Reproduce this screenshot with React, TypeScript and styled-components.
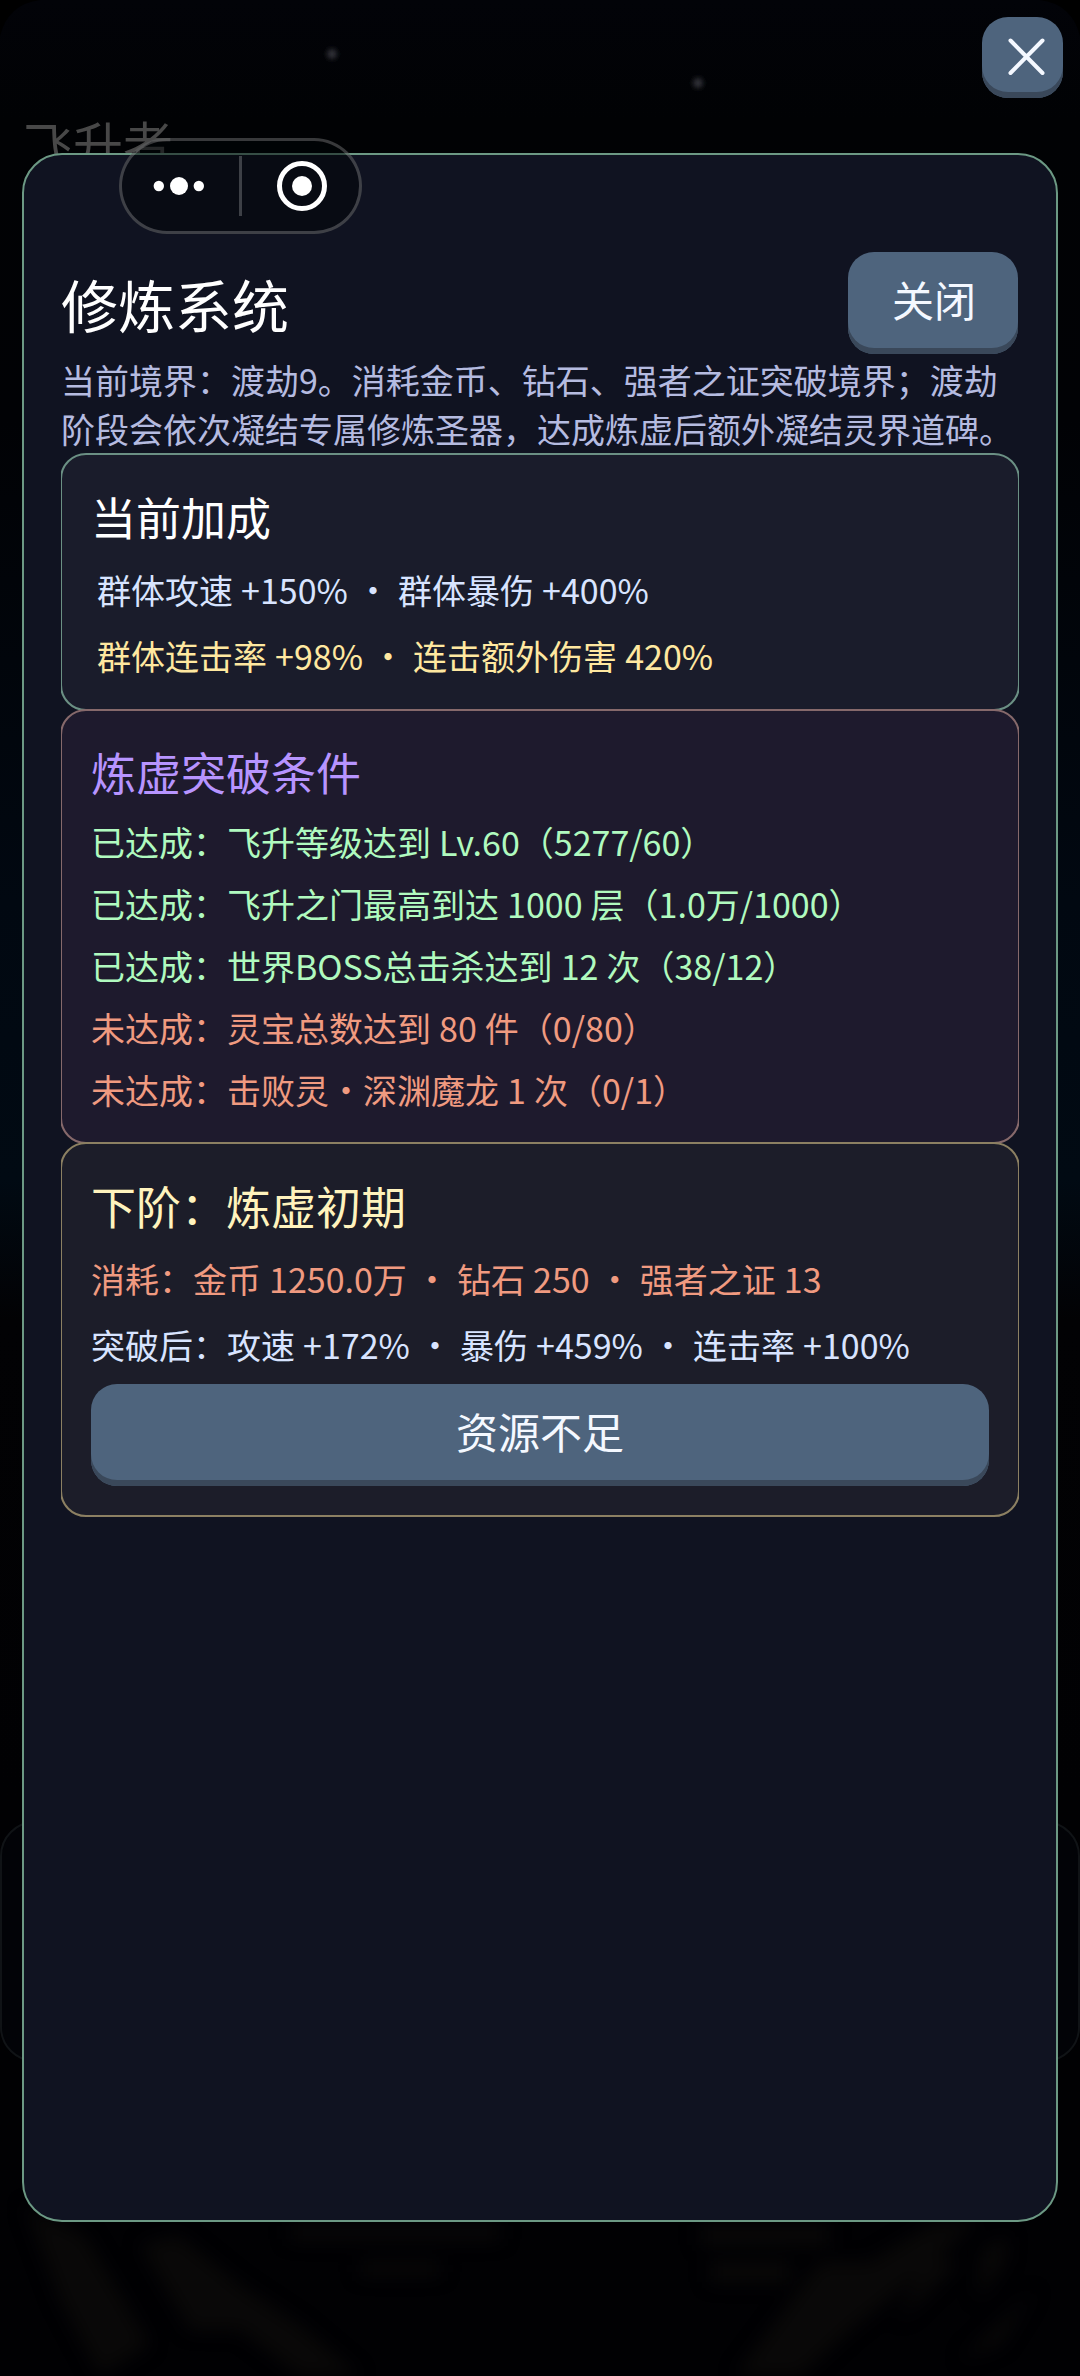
import React from "react";
import styled, { createGlobalStyle } from "styled-components";

const GlobalStyle = createGlobalStyle`
  html, body { margin: 0; padding: 0; background: #000; }
  *, *::before, *::after { box-sizing: border-box; }
  body { font-family: "Noto Sans CJK SC", "Noto Sans", sans-serif; font-weight: 400; }
`;

const Screen = styled.main`
  position: relative;
  width: 1080px;
  height: 2376px;
  padding: 153px 22px 154px;
  overflow: hidden;
  display: flex;
  flex-direction: column;
  background: linear-gradient(180deg, #020308 0, #010204 120px, #010205 420px, #010811 900px, #010a13 1180px, #020204 1320px, #010103 1800px, #010103 2376px);
`;

const Scenery = styled.svg`
  position: absolute;
  inset: 0;
`;

const PlayerName = styled.div`
  position: absolute;
  left: 23px;
  top: 106px;
  font-size: 50px;
  line-height: 72px;
  color: #484848;
`;

const Panel = styled.section`
  position: relative;
  flex: 1;
  display: flex;
  flex-direction: column;
  padding: 97px 37px 0;
  border: 2px solid #6c9984;
  border-radius: 40px;
  background: #101321;
`;

const Header = styled.header`
  display: flex;
  justify-content: space-between;
  align-items: flex-start;
  height: 103px;
`;

const Title = styled.h1`
  margin: 0;
  font-size: 57px;
  font-weight: 400;
  line-height: 103px;
  color: #fff;
`;

const Button = styled.button<{ $wide?: boolean }>`
  display: flex;
  align-items: center;
  justify-content: center;
  width: ${(p) => (p.$wide ? "100%" : "170px")};
  height: 102px;
  margin: ${(p) => (p.$wide ? "6px 0 0" : "0 1px 0 0")};
  padding: ${(p) => (p.$wide ? "0 0 8px" : "0 0 8px 2px")};
  border: 0;
  border-radius: 26px;
  background: #4e647d;
  box-shadow: inset 0 -6px 0 #3a485a;
  color: #f4f8ff;
  font-family: inherit;
  font-size: 42px;
  line-height: 60px;
`;

const Hint = styled.p`
  margin: 0;
  height: 98px;
  font-size: 34px;
  line-height: 49px;
  color: #b5bbe0;
`;

const CardList = styled.div`
  overflow: hidden;
`;

const Card = styled.article<{ $border: string; $fill: string; $height: number; $top?: number }>`
  position: relative;
  display: flex;
  flex-direction: column;
  height: ${(p) => p.$height}px;
  margin: 0 -1px;
  padding: ${(p) => p.$top ?? 29}px 29px 0;
  border: 2px solid ${(p) => p.$border};
  border-radius: 26px;
  background: ${(p) => p.$fill};

  & + & {
    margin-top: -2px;
  }
`;

const CardTitle = styled.h2<{ $color: string; $gap?: number }>`
  margin: 0 0 ${(p) => p.$gap ?? 7}px;
  font-size: 45px;
  font-weight: 400;
  line-height: 66px;
  color: ${(p) => p.$color};
`;

const Line = styled.div<{ $color: string; $height: number; $indent?: number }>`
  height: ${(p) => p.$height}px;
  padding-left: ${(p) => p.$indent ?? 0}px;
  font-size: 34px;
  line-height: ${(p) => p.$height}px;
  word-spacing: 0.45px;
  white-space: pre;
  color: ${(p) => p.$color};
`;

const CloseCorner = styled.button`
  position: absolute;
  left: 982px;
  top: 17px;
  width: 81px;
  height: 81px;
  padding: 0;
  border: 0;
  border-radius: 26px;
  background: #4e647d;
  box-shadow: inset 0 -6px 0 #3a485a;

  svg { display: block; }
`;

const Capsule = styled.nav`
  position: absolute;
  left: 119px;
  top: 138px;
  width: 243px;
  height: 96px;
  border: 3px solid rgba(255, 255, 255, 0.22);
  border-radius: 48px;
  background: rgba(0, 4, 5, 0.5);
  display: flex;
  align-items: center;

  svg { display: block; }
`;

const conditions = [
  { done: true, text: "飞升等级达到 Lv.60（5277/60）" },
  { done: true, text: "飞升之门最高到达 1000 层（1.0万/1000）" },
  { done: true, text: "世界BOSS总击杀达到 12 次（38/12）" },
  { done: false, text: "灵宝总数达到 80 件（0/80）" },
  { done: false, text: "击败灵・深渊魔龙 1 次（0/1）" },
];

export default function App() {
  return (
    <>
      <GlobalStyle />
      <Screen>
        <Scenery width="1080" height="2376" viewBox="0 0 1080 2376" aria-hidden="true">
          <defs>
            <filter id="soft" x="-50%" y="-50%" width="200%" height="200%">
              <feGaussianBlur stdDeviation="2.4" />
            </filter>
            <filter id="haze" x="-20%" y="-20%" width="140%" height="140%" colorInterpolationFilters="sRGB">
              <feGaussianBlur stdDeviation="9" />
            </filter>
          </defs>
          <path d="M0 0H40Q8 4 0 36ZM1080 0H1040Q1072 4 1080 36Z" fill="#000" />
          <g filter="url(#soft)" fill="#303238">
            <circle cx="332" cy="54" r="5" />
            <circle cx="698" cy="83" r="5" />
          </g>
          <g filter="url(#haze)" fill="#090808">
            <path d="M25 2205L85 2235L118 2290L150 2345L100 2376L60 2300Z" />
            <path d="M140 2245L178 2235L240 2285L300 2325L360 2376H300L240 2330L190 2330Z" />
            <path d="M735 2376L820 2262L870 2262L930 2225L980 2220L900 2290L850 2330L800 2376Z" />
            <path d="M900 2320L925 2255L960 2262ZM978 2300L982 2250L1008 2235L1005 2262ZM960 2360L1035 2290L1000 2345Z" />
            <path d="M290 2225H500V2240H290ZM360 2262H440V2275H360ZM700 2225H830V2245H700ZM710 2262H790V2282H710Z" />
          </g>
          <rect x="1" y="1822" width="1078" height="239" rx="34" fill="#020307" stroke="#101316" strokeWidth="2" />
        </Scenery>
        <PlayerName>飞升者</PlayerName>

        <Panel>
          <Header>
            <Title>修炼系统</Title>
            <Button>关闭</Button>
          </Header>
          <Hint>
            当前境界：渡劫9。消耗金币、钻石、强者之证突破境界；渡劫阶段会依次凝结专属修炼圣器，达成炼虚后额外凝结灵界道碑。
          </Hint>
          <CardList>
            <Card $border="#6b9084" $fill="#1a1c2b" $height={258}>
              <CardTitle $color="#ffffff">当前加成</CardTitle>
              <Line $color="#d8e4ff" $height={66} $indent={6}>群体攻速 +150% ・ 群体暴伤 +400%</Line>
              <Line $color="#ffe8a0" $height={66} $indent={6}>群体连击率 +98% ・ 连击额外伤害 420%</Line>
            </Card>
            <Card $border="#86696b" $fill="#1e1a2d" $height={435} $top={28}>
              <CardTitle $color="#b794ff" $gap={6}>炼虚突破条件</CardTitle>
              {conditions.map((c) => (
                <Line key={c.text} $color={c.done ? "#b0fabf" : "#f09a80"} $height={62}>
                  {c.done ? "已达成：" : "未达成："}
                  {c.text}
                </Line>
              ))}
            </Card>
            <Card $border="#8c8062" $fill="#1c1d29" $height={375}>
              <CardTitle $color="#fff3bd">下阶：炼虚初期</CardTitle>
              <Line $color="#f09a80" $height={66}>消耗：金币 1250.0万 ・ 钻石 250 ・ 强者之证 13</Line>
              <Line $color="#d8e4ff" $height={66}>突破后：攻速 +172% ・ 暴伤 +459% ・ 连击率 +100%</Line>
              <Button $wide>资源不足</Button>
            </Card>
          </CardList>
        </Panel>

        <CloseCorner aria-label="关闭">
          <svg width="81" height="81" viewBox="0 0 81 81">
            <path d="M28.5 23.5L60.5 56M60.5 23.5L28.5 56" stroke="#f4f8ff" strokeWidth="4" strokeLinecap="round" />
          </svg>
        </CloseCorner>

        <Capsule>
          <svg width="237" height="90" viewBox="122 141 237 90">
            <g fill="#fff">
              <circle cx="158.8" cy="186" r="5.2" />
              <circle cx="179" cy="186" r="9" />
              <circle cx="198.8" cy="186" r="5.2" />
              <circle cx="302" cy="186" r="10" />
            </g>
            <circle cx="302" cy="186" r="22.5" fill="none" stroke="#fff" strokeWidth="5" />
            <rect x="239" y="156" width="3" height="60" fill="#3d4046" />
          </svg>
        </Capsule>
      </Screen>
    </>
  );
}
